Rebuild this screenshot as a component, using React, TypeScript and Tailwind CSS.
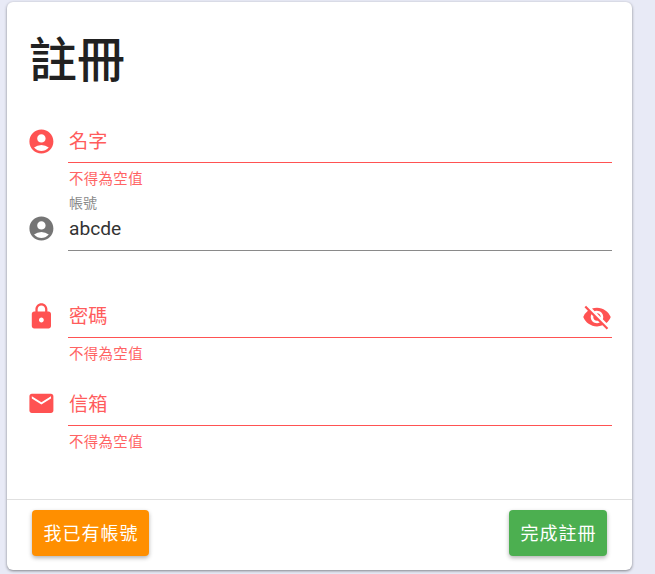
import { MdAccountCircle, MdEmail, MdLock, MdVisibilityOff } from 'react-icons/md'
import type { ReactNode } from 'react'

const FONT = "font-['Roboto','Noto_Sans_CJK_TC',sans-serif]"

interface FieldProps {
    icon: ReactNode
    label?: string
    smallLabel?: string
    value?: string
    error?: string
    trailing?: ReactNode
    invalid?: boolean
}

function Field({ icon, label, smallLabel, value, error, trailing, invalid = true }: FieldProps) {
    return (
        <div className="flex h-[87.5px] items-start">
            <div className={`mt-[9.5px] w-[41px] shrink-0 text-[28.8px] ${invalid ? 'text-[#ff5252]' : 'text-[#757575]'}`}>
                {icon}
            </div>
            <div className="flex-1">
                <div className={`relative h-[46px] border-b ${invalid ? 'border-[#ff5252]' : 'border-[#8a8a8a]'}`}>
                    {smallLabel && (
                        <span className="absolute left-[1px] top-[-10px] text-[14px] leading-[16px] text-[#8a8a8a]">{smallLabel}</span>
                    )}
                    {label && <span className="absolute left-[1px] top-[13px] text-[19.2px] leading-[24px] text-[#ff5c5c]">{label}</span>}
                    {value && <span className="absolute left-[1px] top-[12px] text-[19.2px] leading-[24px] text-[#333333]">{value}</span>}
                    {trailing && <div className="absolute right-0 top-[10px] text-[30px] leading-none text-[#ff5252]">{trailing}</div>}
                </div>
                {error && <p className="ml-[1px] mt-[8px] text-[14.4px] leading-[18px] tracking-[0.4px] text-[#ff6464]">{error}</p>}
            </div>
        </div>
    )
}

export default function App() {
    return (
        <div className={`${FONT} h-[574px] w-[655px] overflow-hidden bg-[#e8eaf6] pl-[7px] pt-[2px]`}>
            <div className="flex h-[568px] w-[625px] flex-col rounded-[6px] bg-white shadow-[0_1px_3px_rgba(0,0,0,0.45)]">
                <div className="flex-1 pl-[20px] pr-[20px]">
                    <h1 className="ml-[2px] mt-[31px] h-[84px] text-[48px] font-medium leading-[56px] text-[#212121]">註冊</h1>
                    <Field icon={<MdAccountCircle />} label="名字" error="不得為空值" />
                    <Field icon={<MdAccountCircle />} smallLabel="帳號" value="abcde" invalid={false} />
                    <Field icon={<MdLock />} label="密碼" error="不得為空值" trailing={<MdVisibilityOff />} />
                    <Field icon={<MdEmail />} label="信箱" error="不得為空值" />
                </div>
                <div className="flex h-[71px] items-start justify-between border-t border-[#e0e0e0] pl-[25px] pr-[25px] pt-[10px]">
                    <button className="h-[46px] w-[117px] rounded-[4px] bg-[#ff8f00] pl-[1px] text-[18px] tracking-[1px] text-white shadow-[0_2px_4px_rgba(0,0,0,0.3)]">
                        我已有帳號
                    </button>
                    <button className="h-[46px] w-[98px] rounded-[4px] bg-[#4caf50] pl-[1px] text-[18px] tracking-[1px] text-white shadow-[0_2px_4px_rgba(0,0,0,0.3)]">
                        完成註冊
                    </button>
                </div>
            </div>
        </div>
    )
}
